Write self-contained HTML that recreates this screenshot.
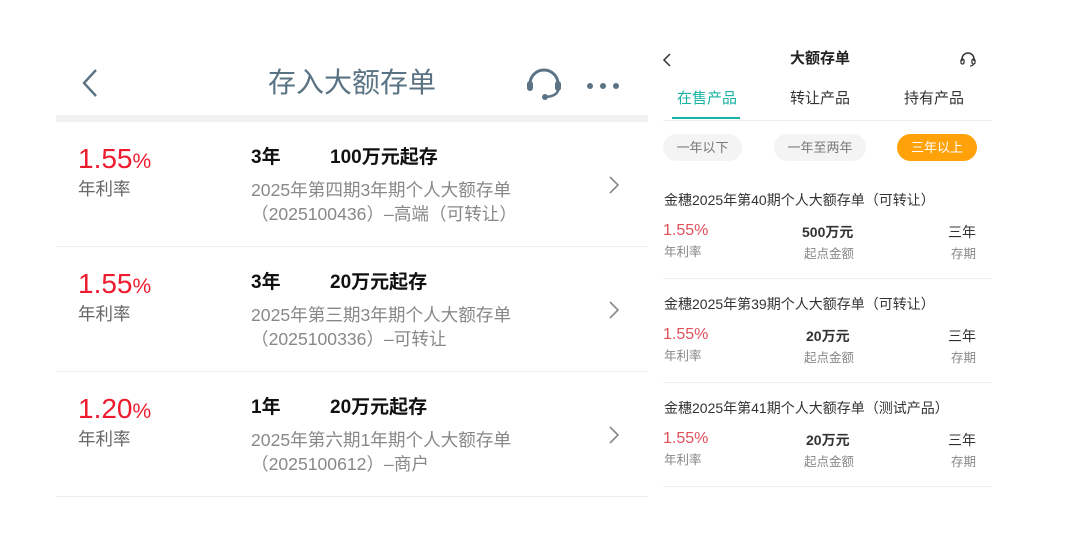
<!DOCTYPE html>
<html><head><meta charset="utf-8"><style>
*{margin:0;padding:0;box-sizing:border-box}
body{width:1080px;height:541px;background:#fff;position:relative;overflow:hidden;font-family:"Liberation Sans","Noto Sans CJK SC",sans-serif}
.a{position:absolute;white-space:nowrap;line-height:1}
.rate{color:#ee1b2e;font-size:28px}
.rate span{font-size:21px}
.lab{color:#666;font-size:17.5px}
.yr{font-size:19px;font-weight:bold;color:#111}
.desc{color:#888;font-size:17.6px;line-height:24px}
.sep{position:absolute;left:56px;width:592px;height:1px;background:#eee}
.t{font-size:14px;color:#333}
.r{font-size:16px;color:#e0505a}
.s{font-size:12.5px;color:#888}
.m{font-size:14px;color:#333;font-weight:bold}
.d2{position:absolute;left:663px;width:329px;height:1px;background:#eee}
.pill{position:absolute;top:134px;height:27px;border-radius:14px;background:#f4f4f4;color:#777;font-size:13px;text-align:center;line-height:27px}
</style></head><body>
<!-- left -->
<svg class="a" style="left:80px;top:68px" width="20" height="30" viewBox="0 0 20 30"><path d="M16 2 L4 15 L16 28" fill="none" stroke="#5b7485" stroke-width="2.4"/></svg>
<div class="a" style="left:268px;top:69px;font-size:28px;color:#5a7384">存入大额存单</div>
<svg class="a" style="left:524px;top:62px" width="40" height="40" viewBox="0 0 40 40"><path d="M6 22 A14 14 0 0 1 34 22" fill="none" stroke="#5b7485" stroke-width="3"/><rect x="3" y="19" width="6" height="10" rx="3" fill="#5b7485"/><rect x="31" y="19" width="6" height="10" rx="3" fill="#5b7485"/><path d="M34 28 Q33 34 22 35" fill="none" stroke="#5b7485" stroke-width="2.5"/><circle cx="21" cy="35" r="3" fill="#5b7485"/></svg>
<div class="a" style="left:586px;top:78px"><svg width="34" height="8"><circle cx="4" cy="4" r="3" fill="#5b7485"/><circle cx="17" cy="4" r="3" fill="#5b7485"/><circle cx="30" cy="4" r="3" fill="#5b7485"/></svg></div>
<div style="position:absolute;left:56px;top:115px;width:592px;height:7px;background:#f1f1f1"></div>

<div class="a rate" style="left:78px;top:145px">1.55<span>%</span></div>
<div class="a lab" style="left:78px;top:181px">年利率</div>
<div class="a yr" style="left:251px;top:148px">3年</div>
<div class="a yr" style="left:330px;top:148px">100万元起存</div>
<div class="a desc" style="left:251px;top:178px">2025年第四期3年期个人大额存单<br>（2025100436）–高端（可转让）</div>
<svg class="a" style="left:608px;top:175px" width="12" height="20"><path d="M2 2 L10 10 L2 18" fill="none" stroke="#888" stroke-width="1.6"/></svg>
<div class="sep" style="top:246px"></div>

<div class="a rate" style="left:78px;top:270px">1.55<span>%</span></div>
<div class="a lab" style="left:78px;top:306px">年利率</div>
<div class="a yr" style="left:251px;top:273px">3年</div>
<div class="a yr" style="left:330px;top:273px">20万元起存</div>
<div class="a desc" style="left:251px;top:303px">2025年第三期3年期个人大额存单<br>（2025100336）–可转让</div>
<svg class="a" style="left:608px;top:300px" width="12" height="20"><path d="M2 2 L10 10 L2 18" fill="none" stroke="#888" stroke-width="1.6"/></svg>
<div class="sep" style="top:371px"></div>

<div class="a rate" style="left:78px;top:395px">1.20<span>%</span></div>
<div class="a lab" style="left:78px;top:431px">年利率</div>
<div class="a yr" style="left:251px;top:398px">1年</div>
<div class="a yr" style="left:330px;top:398px">20万元起存</div>
<div class="a desc" style="left:251px;top:428px">2025年第六期1年期个人大额存单<br>（2025100612）–商户</div>
<svg class="a" style="left:608px;top:425px" width="12" height="20"><path d="M2 2 L10 10 L2 18" fill="none" stroke="#888" stroke-width="1.6"/></svg>
<div class="sep" style="top:496px"></div>

<!-- right -->
<svg class="a" style="left:662px;top:52px" width="10" height="16"><path d="M8 2 L2 8 L8 14" fill="none" stroke="#333" stroke-width="1.5"/></svg>
<div class="a" style="left:790px;top:51px;font-size:15px;font-weight:bold;color:#222">大额存单</div>
<svg class="a" style="left:959px;top:50px" width="18" height="18" viewBox="0 0 18 18"><path d="M3 11 V9 A6 6 0 0 1 15 9 V11" fill="none" stroke="#333" stroke-width="1.5"/><rect x="2" y="9" width="3" height="5" rx="1.5" fill="none" stroke="#333" stroke-width="1.3"/><rect x="13" y="9" width="3" height="5" rx="1.5" fill="none" stroke="#333" stroke-width="1.3"/><path d="M14.5 14 Q14 16 11 16" fill="none" stroke="#333" stroke-width="1.2"/></svg>
<div class="a" style="left:677px;top:91px;font-size:15px;color:#17b3a3">在售产品</div>
<div style="position:absolute;left:672px;top:117px;width:68px;height:2px;background:#17b3a3"></div>
<div class="a" style="left:790px;top:91px;font-size:15px;color:#333">转让产品</div>
<div class="a" style="left:904px;top:91px;font-size:15px;color:#333">持有产品</div>
<div class="d2" style="top:120px"></div>
<div class="pill" style="left:663px;width:79px">一年以下</div>
<div class="pill" style="left:774px;width:92px">一年至两年</div>
<div class="pill" style="left:897px;width:80px;background:#ffa20a;color:#fff">三年以上</div>

<div class="a t" style="left:664px;top:193px">金穗2025年第40期个人大额存单（可转让）</div>
<div class="a r" style="left:663px;top:223px">1.55%</div>
<div class="a m" style="left:802px;top:225px">500万元</div>
<div class="a t" style="left:948px;top:225px">三年</div>
<div class="a s" style="left:664px;top:246px">年利率</div>
<div class="a s" style="left:804px;top:248px">起点金额</div>
<div class="a s" style="left:951px;top:248px">存期</div>
<div class="d2" style="top:278px"></div>

<div class="a t" style="left:664px;top:297px">金穗2025年第39期个人大额存单（可转让）</div>
<div class="a r" style="left:663px;top:327px">1.55%</div>
<div class="a m" style="left:806px;top:329px">20万元</div>
<div class="a t" style="left:948px;top:329px">三年</div>
<div class="a s" style="left:664px;top:350px">年利率</div>
<div class="a s" style="left:804px;top:352px">起点金额</div>
<div class="a s" style="left:951px;top:352px">存期</div>
<div class="d2" style="top:382px"></div>

<div class="a t" style="left:664px;top:401px">金穗2025年第41期个人大额存单（测试产品）</div>
<div class="a r" style="left:663px;top:431px">1.55%</div>
<div class="a m" style="left:806px;top:433px">20万元</div>
<div class="a t" style="left:948px;top:433px">三年</div>
<div class="a s" style="left:664px;top:454px">年利率</div>
<div class="a s" style="left:804px;top:456px">起点金额</div>
<div class="a s" style="left:951px;top:456px">存期</div>
<div class="d2" style="top:486px"></div>
</body></html>
